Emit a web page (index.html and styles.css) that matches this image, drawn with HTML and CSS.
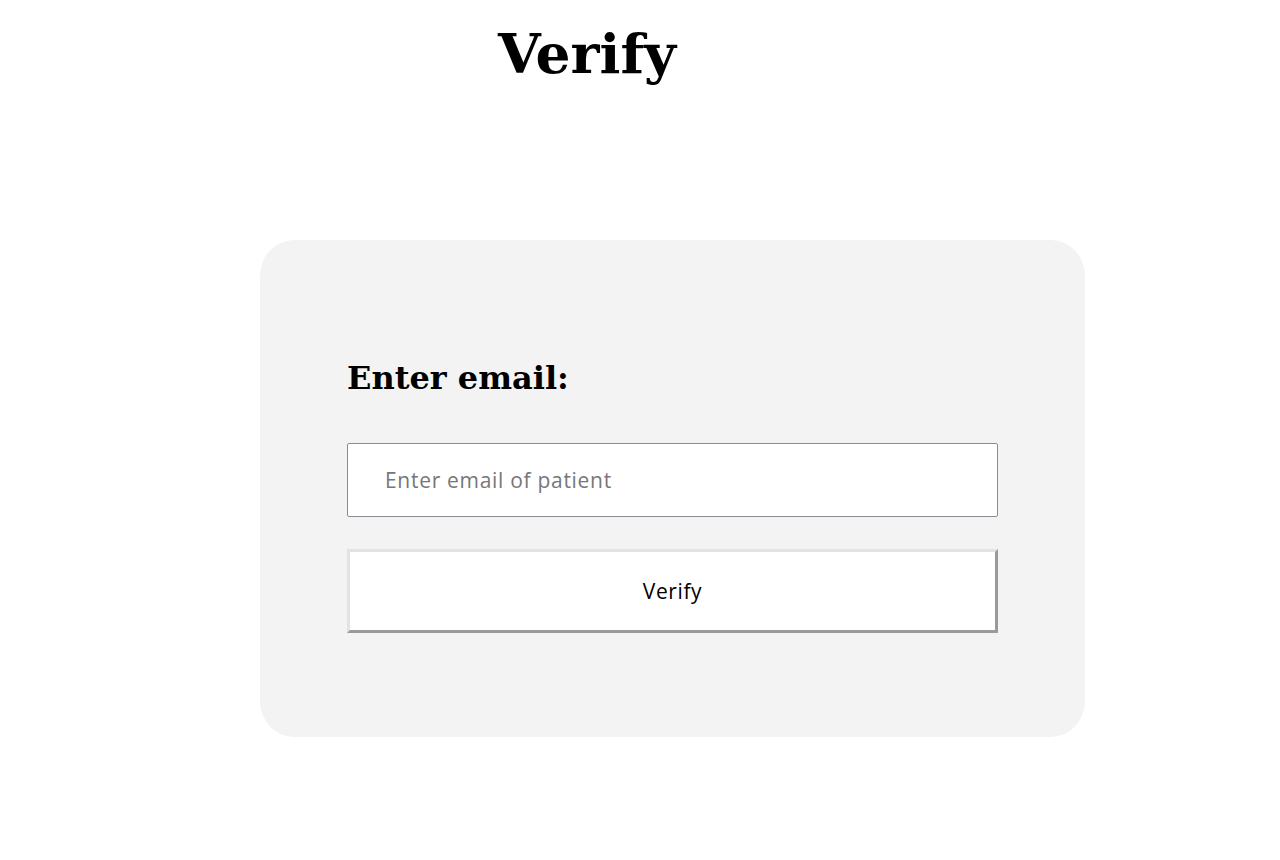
FILE: index.html
```html
<!DOCTYPE html>
<html>
<head>
<meta charset="utf-8">
<link rel="stylesheet" href="styles.css">
</head>
<body>
<header class="top">
  <h1 class="title">Verify</h1>
</header>
<main class="wrap">
  <form class="card">
    <h2 class="label">Enter email:</h2>
    <input class="field" type="email" placeholder="Enter email of patient">
    <button class="btn" type="button">Verify</button>
  </form>
</main>
</body>
</html>
```

FILE: styles.css
```css
html, body {
  margin: 0;
  padding: 0;
  background: #ffffff;
}
body {
  font-family: "DejaVu Serif", serif;
}
.top {
  width: 1174px;
  display: flex;
  justify-content: center;
  padding-top: 22px;
}
.title {
  margin: 0;
  font-family: "DejaVu Serif", serif;
  font-weight: bold;
  font-size: 55px;
  line-height: 64px;
}
.wrap {
  display: flex;
  padding-left: 260px;
  padding-top: 154px;
}
.card {
  box-sizing: border-box;
  width: 825px;
  height: 497px;
  background: #f3f3f3;
  border-radius: 34px / 36px;
  padding: 117px 87px 0 87px;
  display: flex;
  flex-direction: column;
}
.label {
  margin: 0 0 44px 0;
  font-family: "DejaVu Serif", serif;
  font-weight: bold;
  font-size: 32px;
  line-height: 42px;
}
.field {
  box-sizing: border-box;
  width: 651px;
  height: 74px;
  border: 1px solid #8b8b95;
  border-radius: 2px;
  background: #ffffff;
  padding: 0 37px;
  font-family: "Open Sans", sans-serif;
  font-size: 21px;
  letter-spacing: 0.7px;
  color: #333;
  outline: none;
}
.field::placeholder {
  color: #777777;
}
.btn {
  box-sizing: border-box;
  margin-top: 32px;
  width: 651px;
  height: 84px;
  background: #ffffff;
  border-style: solid;
  border-width: 3px;
  border-color: #e3e3e3 #9a9a9a #9a9a9a #e3e3e3;
  font-family: "Open Sans", sans-serif;
  font-size: 21px;
  letter-spacing: 0.6px;
  color: #000;
  padding: 0;
}
```
